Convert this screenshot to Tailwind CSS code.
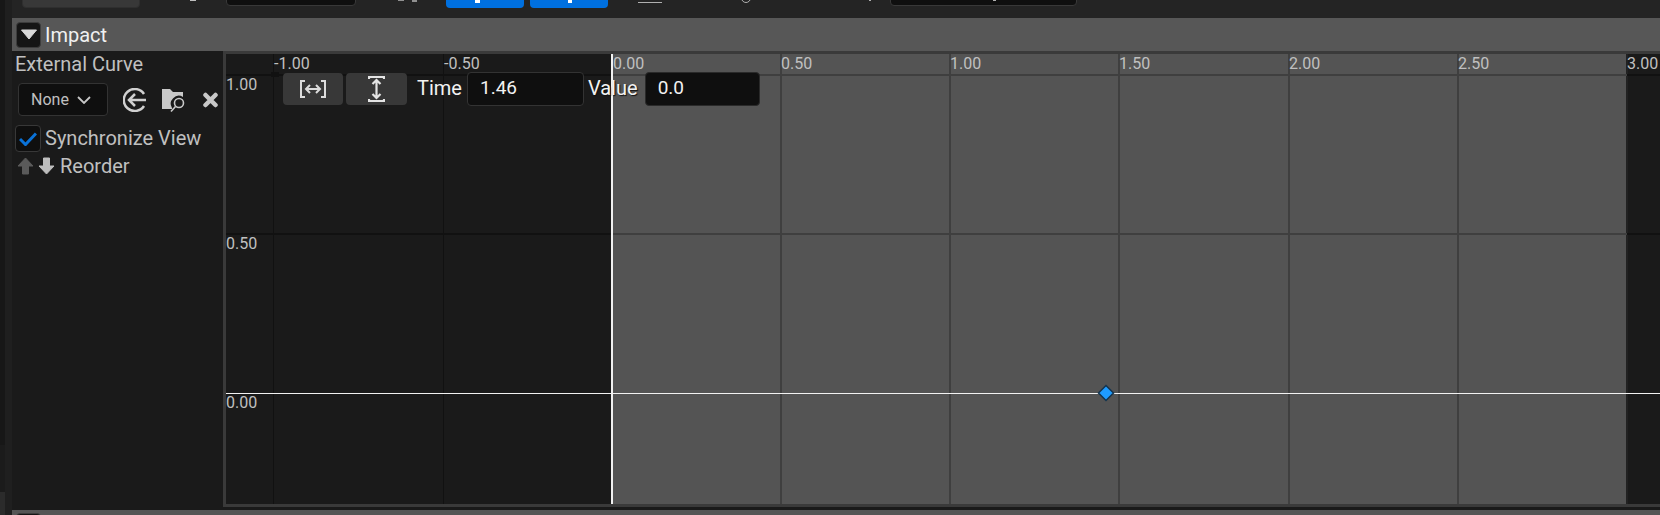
<!DOCTYPE html>
<html lang="en">

<head>
    <meta charset="UTF-8">
    <title>Impact Curve</title>
    <script src="https://cdn.jsdelivr.net/npm/@tailwindcss/browser@4"></script>
</head>

<body class="w-[1660px] h-[515px] overflow-hidden flex bg-[#1a1a1a] font-['Roboto',sans-serif]">
    <!-- left window edge -->
    <div class="w-3 h-full flex shrink-0">
        <div class="w-[5px] h-full flex flex-col">
            <div class="h-[445px] bg-[#171717]"></div>
            <div class="h-[47px] bg-[#1b1b1b]"></div>
            <div class="flex-1 bg-[#2b2b2b]"></div>
        </div>
        <div class="w-[7px] h-full bg-[#1f1f1f]"></div>
    </div>

    <div class="flex-1 flex flex-col min-w-0">
        <!-- clipped toolbar -->
        <div class="h-[18px] bg-[#242424] relative shrink-0 overflow-hidden">
            <div class="absolute left-[10px] top-[-10px] w-[118px] h-[18px] rounded bg-[#383838] border border-[#2f2f2f]"></div>
            <div class="absolute left-[178px] top-0 w-[6px] h-px bg-[#c0c0c0]"></div>
            <div class="absolute left-[214px] top-[-10px] w-[130px] h-4 rounded bg-[#0f0f0f] border border-[#383838]"></div>
            <div class="absolute left-[386px] top-0 w-[6px] h-px bg-[#909090]"></div>
            <div class="absolute left-[400px] top-0 w-[5px] h-[2px] bg-[#909090]"></div>
            <div class="absolute left-[434px] top-[-10px] w-[78px] h-[18px] rounded bg-[#0070e0]"></div>
            <div class="absolute left-[463px] top-0 w-[5px] h-[3px] bg-white"></div>
            <div class="absolute left-[518px] top-[-10px] w-[78px] h-[18px] rounded bg-[#0070e0]"></div>
            <div class="absolute left-[556px] top-0 w-[4px] h-[3px] bg-white"></div>
            <div class="absolute left-[626px] top-0 w-[24px] h-[3px] border-b border-[#b0b0b0]"></div>
            <div class="absolute left-[729px] top-[-7px] w-[10px] h-[10px] rounded-full border border-[#b0b0b0]"></div>
            <div class="absolute left-[857px] top-0 w-[2px] h-px bg-[#b0b0b0]"></div>
            <div class="absolute left-[878px] top-[-10px] w-[187px] h-4 rounded bg-[#0f0f0f] border border-[#383838]"></div>
            <div class="absolute left-[981px] top-0 w-[3px] h-px bg-[#b0b0b0]"></div>
        </div>

        <!-- section header -->
        <div class="h-[33px] bg-[#575757] flex items-center gap-[4px] pl-1 shrink-0">
            <div class="w-[25px] h-[26px] rounded bg-[#151515] border border-[#3d3d3d] flex items-center justify-center">
                <svg width="18" height="11" viewBox="0 0 18 11"><path d="M1.500 1h15L9 10z" fill="#d8d8d8" stroke="#d8d8d8" stroke-linejoin="round"/></svg>
            </div>
            <span class="text-[20px] text-[#f0f0f0]">Impact</span>
        </div>

        <div class="flex-1 flex min-h-0">
            <!-- curve options -->
            <div class="w-[211px] shrink-0 flex flex-col pl-[3px] text-[#c0c0c0]">
                <div class="text-[20px] leading-[21px] mt-[3px]">External Curve</div>
                <div class="flex items-center mt-2 ml-[3px]">
                    <div class="w-[90px] h-[33px] rounded bg-[#0f0f0f] border border-[#333] flex items-center gap-2 pl-3 text-[16px]">
                        None
                        <svg width="14" height="8" viewBox="0 0 14 8"><path d="M1 1l6 6 6-6" fill="none" stroke="#c8c8c8" stroke-width="1.800"/></svg>
                    </div>
                    <svg class="ml-[15px]" width="24" height="24" viewBox="0 0 24 24" fill="none" stroke="#d0d0d0" stroke-width="2.500"><path d="M21 6A11 11 0 1 0 21 18"/><path d="M23 12H7M12 6l-6 6 6 6"/></svg>
                    <svg class="ml-[15px]" width="24" height="24" viewBox="0 0 24 24"><path d="M0 1h8l3 3h10v5a8 8 0 0 0-11 11v1H0z" fill="#c8c8c8"/><circle cx="17" cy="15" r="4.500" fill="none" stroke="#c8c8c8" stroke-width="1.600"/><path d="M13.500 18.500L9 23.500" stroke="#c8c8c8" stroke-width="1.600"/></svg>
                    <svg class="ml-[17px]" width="15" height="16" viewBox="0 0 15 16"><path d="M2.500 3l10 10M12.500 3l-10 10" stroke="#c8c8c8" stroke-width="4.500" stroke-linecap="round"/></svg>
                </div>
                <div class="flex items-center gap-[4px] mt-[9px]">
                    <div class="w-[26px] h-[27px] rounded bg-[#0f0f0f] border border-[#383838] flex items-center justify-center">
                        <svg width="18" height="14" viewBox="0 0 18 14"><path d="M1 7l5.500 5.500L17 1.500" fill="none" stroke="#0a72d8" stroke-width="3"/></svg>
                    </div>
                    <span class="text-[20px] leading-[27px]">Synchronize View</span>
                </div>
                <div class="flex items-center mt-[2px] ml-[2px]">
                    <svg class="blur-[0.5px]" width="17" height="18" viewBox="0 0 17 18"><path d="M8.500 1L16 9h-4.500v8h-6V9H1z" fill="#5a5a5a" stroke="#5a5a5a" stroke-linejoin="round"/></svg>
                    <svg class="ml-[4px] blur-[0.5px]" width="17" height="18" viewBox="0 0 17 18"><path d="M8.500 17L1 9h4.500V1h6v8H16z" fill="#bdbdbd" stroke="#bdbdbd" stroke-linejoin="round"/></svg>
                    <span class="text-[20px] leading-[24px] ml-[5px]">Reorder</span>
                </div>
            </div>

            <!-- curve canvas -->
            <div class="flex-1 flex flex-col">
                <div class="relative h-[456px] bg-[#1a1a1a] border-l-[3px] border-y-[3px] border-[#3a3a3a] overflow-hidden">
                    <div class="absolute left-[386px] top-0 bottom-0 w-[1015px] bg-[#545454]"></div>

                    <!-- vertical grid -->
                    <div class="absolute left-[47px] top-0 bottom-0 w-px bg-[#111111]"></div>
                    <div class="absolute left-[45px] top-[18px] w-2 h-[5px] bg-[#111111]"></div>
                    <div class="absolute left-[217px] top-0 bottom-0 w-px bg-[#111111]"></div>
                    <div class="absolute left-[554px] top-0 bottom-0 w-[2px] bg-[#3f3f3f]"></div>
                    <div class="absolute left-[723px] top-0 bottom-0 w-[2px] bg-[#3f3f3f]"></div>
                    <div class="absolute left-[892px] top-0 bottom-0 w-[2px] bg-[#3f3f3f]"></div>
                    <div class="absolute left-[1062px] top-0 bottom-0 w-[2px] bg-[#3f3f3f]"></div>
                    <div class="absolute left-[1231px] top-0 bottom-0 w-[2px] bg-[#3f3f3f]"></div>
                    <div class="absolute left-[1400px] top-0 bottom-0 w-[2px] bg-[#222222]"></div>

                    <!-- horizontal grid -->
                    <div class="absolute left-0 right-0 top-5 h-[2px] bg-[#111111]"></div>
                    <div class="absolute left-[386px] w-[1015px] top-5 h-[2px] bg-[#3f3f3f]"></div>
                    <div class="absolute left-0 right-0 top-[179px] h-[2px] bg-[#111111]"></div>
                    <div class="absolute left-[386px] w-[1015px] top-[179px] h-[2px] bg-[#3f3f3f]"></div>
                    <div class="absolute left-0 right-0 top-[339px] h-px bg-[#f2f2f2]"></div>
                    <div class="absolute left-[385px] top-0 bottom-0 w-[2px] bg-[#f2f2f2]"></div>

                    <!-- axis labels -->
                    <span class="absolute left-[48px] top-px text-[16px] leading-[18px] text-[#c0c0c0]">-1.00</span>
                    <span class="absolute left-[218px] top-px text-[16px] leading-[18px] text-[#c0c0c0]">-0.50</span>
                    <span class="absolute left-[387px] top-px text-[16px] leading-[18px] text-[#c0c0c0]">0.00</span>
                    <span class="absolute left-[555px] top-px text-[16px] leading-[18px] text-[#c0c0c0]">0.50</span>
                    <span class="absolute left-[724px] top-px text-[16px] leading-[18px] text-[#c0c0c0]">1.00</span>
                    <span class="absolute left-[893px] top-px text-[16px] leading-[18px] text-[#c0c0c0]">1.50</span>
                    <span class="absolute left-[1063px] top-px text-[16px] leading-[18px] text-[#c0c0c0]">2.00</span>
                    <span class="absolute left-[1232px] top-px text-[16px] leading-[18px] text-[#c0c0c0]">2.50</span>
                    <span class="absolute left-[1401px] top-px text-[16px] leading-[18px] text-[#c0c0c0]">3.00</span>
                    <span class="absolute left-0 top-[22px] text-[16px] leading-[18px] text-[#c0c0c0]">1.00</span>
                    <span class="absolute left-0 top-[181px] text-[16px] leading-[18px] text-[#c0c0c0]">0.50</span>
                    <span class="absolute left-0 top-[340px] text-[16px] leading-[18px] text-[#c0c0c0]">0.00</span>

                    <!-- key -->
                    <svg class="absolute left-[871px] top-[330px]" width="18" height="18" viewBox="0 0 18 18"><path d="M9 1.500L16.500 9 9 16.500 1.500 9z" fill="#1e9bff" stroke="#15344d" stroke-width="1.500"/></svg>

                    <!-- overlay controls -->
                    <div class="absolute left-[57px] top-[18px] flex items-center text-[20px] text-[#f2f2f2]">
                        <div class="w-[60px] h-8 rounded bg-[#383838] flex items-center justify-center">
                            <svg width="26" height="18" viewBox="0 0 26 18" fill="none" stroke="#dcdcdc" stroke-width="2"><path d="M5 1H1v16h4M21 1h4v16h-4"/><path d="M6 9h14M10 5L6 9l4 4M16 5l4 4-4 4"/></svg>
                        </div>
                        <div class="w-[61px] h-8 rounded bg-[#383838] flex items-center justify-center ml-[3px]">
                            <svg width="17" height="26" viewBox="0 0 17 26" fill="none" stroke="#e4e4e4" stroke-width="2.200"><path d="M1 3V1h15v2M1 23v2h15v-2"/><path d="M8.500 4v18M4.500 8l4-4 4 4M4.500 18l4 4 4-4"/></svg>
                        </div>
                        <span class="ml-[10px] pb-[2px]">Time</span>
                        <div class="w-[117px] h-[34px] ml-[5px] rounded bg-[#0f0f0f] border border-[#333] flex items-center pl-3 pb-[2px] text-[19px]">1.46</div>
                        <span class="ml-1 pb-[2px] [text-shadow:1px_1px_1px_#111]">Value</span>
                        <div class="w-[115px] h-[34px] ml-[7px] rounded bg-[#0f0f0f] border border-[#2a2a2a] flex items-center pl-3 pb-[2px] text-[19px]">0.0</div>
                    </div>
                </div>
                <div class="h-[3px] bg-[#1a1a1a]"></div>
            </div>
        </div>
        <!-- next section header -->
        <div class="h-[5px] bg-[#555555] shrink-0 relative overflow-hidden">
            <div class="absolute left-1 top-[3px] w-[25px] h-5 rounded bg-[#151515] border border-[#3d3d3d]"></div>
        </div>
    </div>
</body>

</html>
